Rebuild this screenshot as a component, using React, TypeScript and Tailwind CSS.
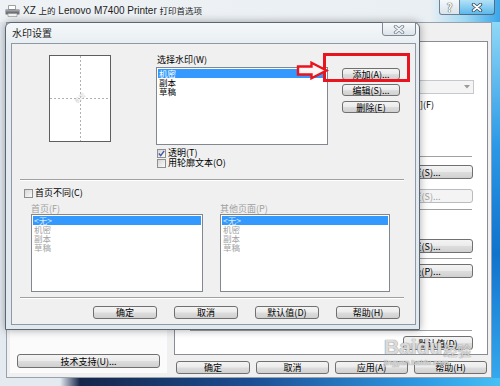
import type { ReactNode } from 'react'

function Btn({ className = '', disabled = false, children }: { className?: string; disabled?: boolean; children?: ReactNode }) {
  return (
    <div
      className={`flex shrink-0 items-center justify-center rounded-[3px] border text-[9px] leading-none whitespace-nowrap ${
        disabled
          ? 'border-[#b8bcc0] bg-[#f4f4f4] text-[#a0a0a0]'
          : 'border-[#707070] bg-[linear-gradient(180deg,#f4f4f4_0%,#ebebeb_48%,#dddddd_52%,#d0d0d0_100%)] text-black'
      } ${className}`}
    >
      {children}
    </div>
  )
}

function Check({ checked = false, label }: { checked?: boolean; label: string }) {
  return (
    <div className="flex h-[10px] items-center gap-[2px]">
      <div className="flex h-[9px] w-[9px] items-center justify-center border border-[#8f8f8f] bg-[linear-gradient(135deg,#d6d6d6,#fafafa)]">
        {checked && (
          <svg width="7" height="7" viewBox="0 0 7 7">
            <path d="M0.8 3.6 L2.7 5.6 L6.2 0.9" stroke="#3b5aa8" strokeWidth="1.4" fill="none" />
          </svg>
        )}
      </div>
      <span className="text-[9px] leading-[10px]">{label}</span>
    </div>
  )
}

function ListBox({ items, disabled = false, className = '' }: { items: string[]; disabled?: boolean; className?: string }) {
  return (
    <div className={`border border-[#828790] bg-white p-px ${className}`}>
      {items.map((t, i) => (
        <div
          key={t}
          className={`h-[9px] pl-px text-[8.5px] leading-[9px] ${
            i === 0 ? (disabled ? 'bg-[#3399ff] text-[#d8e6f5]' : 'bg-[#3399ff] text-white') : disabled ? 'text-[#a3a3a3]' : 'text-black'
          }`}
        >
          {t}
        </div>
      ))}
    </div>
  )
}

function Sep({ className = '' }: { className?: string }) {
  return <div className={`h-[2px] shrink-0 border-t border-b border-t-[#a0a0a0] border-b-white ${className}`} />
}

function XGlyph({ dark, light }: { dark: string; light: string }) {
  return (
    <svg width="12" height="9" viewBox="0 0 12 9">
      <path d="M2.5 1.5 L9.5 7.5 M9.5 1.5 L2.5 7.5" stroke={dark} strokeWidth="3.4" strokeLinecap="round" />
      <path d="M2.5 1.5 L9.5 7.5 M9.5 1.5 L2.5 7.5" stroke={light} strokeWidth="1.7" strokeLinecap="round" />
    </svg>
  )
}

export default function App() {
  return (
    <div className="relative h-[386px] w-[500px] overflow-hidden bg-[#e4eaf0] font-['Noto_Sans_CJK_SC',sans-serif] text-[9px] leading-[11px] text-black">
      {/* outer window */}
      <div className="flex h-full flex-col">
        {/* title bar */}
        <div className="flex h-[22px] shrink-0 items-start bg-[linear-gradient(90deg,#eef2f5_0%,#eaeff3_86%,#9fd8f2_93%,#3aa6ea_100%)]">
          <div className="flex items-center gap-[3px] pl-[5px] pt-[4px]">
            <svg width="15" height="12" viewBox="0 0 15 12">
              <path d="M3.5 0.5h7v4h-7z" fill="#fff" stroke="#8a8a8a" strokeWidth="0.8" />
              <path d="M0.5 4.5h14v5h-14z" fill="#6e737a" />
              <path d="M1 5h13v1.5H1z" fill="#9aa0a6" />
              <path d="M3 8.5h9v3H3z" fill="#f4f4f4" stroke="#8a8a8a" strokeWidth="0.6" />
            </svg>
            <div className="font-['Liberation_Sans','Noto_Sans_CJK_SC',sans-serif] text-[10px] leading-[14px] text-[#1c1c1c]">
              XZ <span className="text-[8.5px]">上的</span> Lenovo M7400 Printer <span className="text-[8.5px]">打印首选项</span>
            </div>
          </div>
          <div className="mr-[5px] ml-auto flex">
            <div className="flex h-[15px] w-[21px] items-center justify-center rounded-bl-[3px] border border-t-0 border-[#6f8191] bg-[linear-gradient(180deg,#f4f8fb,#d9e4ec)] text-[11px] leading-none font-bold text-white [text-shadow:0_0_1px_#333,0_0_1px_#333]">
              ?
            </div>
            <div className="flex h-[15px] w-[35px] items-center justify-center rounded-br-[3px] border border-t-0 border-l-0 border-[#4d6c85] bg-[linear-gradient(180deg,#b4e2f6,#5bb9ec)]">
              <XGlyph dark="#3b4b5b" light="#ffffff" />
            </div>
          </div>
        </div>

        {/* body */}
        <div className="flex min-h-0 flex-1">
          <div className="w-[6px] shrink-0" />
          <div className="flex min-w-0 flex-1 bg-[#f0f0f0] shadow-[inset_0_0_0_1px_#97a2ad]">
            {/* left column */}
            <div className="mt-[4px] mb-[5px] ml-[4px] flex w-[157px] shrink-0 flex-col justify-end bg-[#fbfbfb]">
              <Btn className="mb-[5px] ml-[7px] h-[14px] w-[143px]">技术支持(U)...</Btn>
            </div>
            {/* right column */}
            <div className="ml-[7px] flex w-[314px] shrink-0 flex-col">
              <div className="h-[19px] shrink-0" />
              <div className="flex h-[314px] shrink-0 flex-col border border-[#898c95] bg-white pr-[13px]">
                <div className="mt-[38px] flex h-[14px] w-[150px] items-center justify-end self-end border border-[#c5c8cc] bg-[#f4f4f4] pr-[3px]">
                  <svg width="6" height="4" viewBox="0 0 6 4">
                    <path d="M0 0h6L3 3.5z" fill="#9a9a9a" />
                  </svg>
                </div>
                <div className="mt-[5px] ml-[245px] h-[11px] text-[9px] leading-[11px]">](F)</div>
                <Sep className="mt-[46px] mr-[2px] w-[282px] self-end" />
                <Btn className="mt-[7px] mr-px h-[14px] w-[102px] self-end">设置(S)...</Btn>
                <Btn disabled className="mt-[10px] mr-px h-[14px] w-[102px] self-end">
                  设置(S)...
                </Btn>
                <Sep className="mt-[6px] mr-[2px] w-[282px] self-end" />
                <Btn className="mt-[28px] mr-px h-[14px] w-[102px] self-end">设置(S)...</Btn>
                <Sep className="mt-[5px] mr-[2px] w-[282px] self-end" />
                <Btn className="mt-[4px] mr-px h-[14px] w-[102px] self-end">高级(P)...</Btn>
                <Sep className="mt-[52px] mr-[2px] w-[282px] self-end" />
                <Btn className="mt-[4px] mr-px h-[14px] w-[70px] self-end">默认值(D)</Btn>
              </div>
              <div className="mt-[6px] ml-[2px] flex gap-[6px]">
                <Btn className="h-[13px] w-[74px]">确定</Btn>
                <Btn className="h-[13px] w-[73px]">取消</Btn>
                <Btn className="h-[13px] w-[73px]">应用(A)</Btn>
                <Btn className="h-[13px] w-[73px]">帮助(H)</Btn>
              </div>
            </div>
          </div>
          <div className="w-[8px] shrink-0 bg-[linear-gradient(180deg,#8fd8f6_0%,#2b98e6_35%,#0f73cc_65%,#36a8ee_100%)]" />
        </div>
        <div className="h-[8px] shrink-0 bg-[linear-gradient(90deg,#e4eaf0_0%,#e4eaf0_12%,#16264a_16%,#1c4d92_50%,#2f9be4_85%,#46c0f4_100%)]" />
      </div>

      {/* watermark dialog */}
      <div className="absolute top-[22px] left-[5px] flex h-[308px] w-[415px] flex-col rounded-t-[6px] border border-[#5a6773] bg-[linear-gradient(180deg,#f5f8fa,#e6ecf1_24px,#e1e8ee)] shadow-[0_0_8px_rgba(0,0,0,0.35)]">
        <div className="flex h-[20px] shrink-0 items-start">
          <div className="pl-[6px] text-[10px] leading-[20px] text-[#1e1e1e]">水印设置</div>
          <div className="-mt-px mr-[3px] ml-auto flex h-[14px] w-[34px] items-center justify-center rounded-b-[3px] border border-[#7d8893] bg-[linear-gradient(180deg,#f7f9fb,#dde4ea)]">
            <XGlyph dark="#7a8591" light="#eef1f4" />
          </div>
        </div>
        <div className="ml-[5px] flex h-[282px] w-[405px] flex-col border border-[#8d99a5] bg-[#f0f0f0]">
          {/* top section */}
          <div className="flex h-[135px] shrink-0">
            <div className="mt-[11px] ml-[37px] h-[87px] w-[62px] shrink-0 border border-[#5e5e5e] bg-white">
              <svg width="60" height="85" viewBox="0 0 60 85">
                <line x1="30.5" y1="0" x2="30.5" y2="85" stroke="#b0b0b0" strokeDasharray="2 2" />
                <line x1="0" y1="42.5" x2="60" y2="42.5" stroke="#b0b0b0" strokeDasharray="2 2" />
                <text x="30" y="44" fontSize="6" fill="#d4d4d4" textAnchor="middle" transform="rotate(-45 30 42)">
                  机密
                </text>
              </svg>
            </div>
            <div className="mt-[10px] ml-[45px] flex w-[172px] shrink-0 flex-col">
              <div className="h-[11px] pl-px">选择水印(W)</div>
              <ListBox items={['机密', '副本', '草稿']} className="mt-[2px] h-[78px]" />
              <div className="mt-[3px] pl-px">
                <Check checked label="透明(T)" />
                <Check label="用轮廓文本(O)" />
              </div>
            </div>
            <div className="mt-[24px] ml-[14px] flex w-[58px] shrink-0 flex-col">
              <Btn className="h-[12px] w-[58px]">添加(A)...</Btn>
              <Btn className="mt-[4px] h-[12px] w-[58px]">编辑(S)...</Btn>
              <Btn className="mt-[5px] h-[12px] w-[58px]">删除(E)</Btn>
            </div>
          </div>
          <Sep className="ml-[8px] w-[384px]" />

          {/* pages section */}
          <div className="mt-[7px] ml-[12px]">
            <Check label="首页不同(C)" />
          </div>
          <div className="mt-[5px] flex">
            <div className="ml-[19px] flex w-[172px] shrink-0 flex-col">
              <div className="h-[11px] text-[#a0a0a0]">首页(F)</div>
              <ListBox disabled items={['<无>', '机密', '副本', '草稿']} className="h-[78px]" />
            </div>
            <div className="ml-[17px] flex w-[170px] shrink-0 flex-col">
              <div className="h-[11px] text-[#a0a0a0]">其他页面(P)</div>
              <ListBox disabled items={['<无>', '机密', '副本', '草稿']} className="h-[78px]" />
            </div>
          </div>
          <Sep className="mt-[5px] ml-[8px] w-[384px]" />
          <div className="mt-[7px] ml-[81px] flex gap-[17px]">
            <Btn className="h-[13px] w-[64px]">确定</Btn>
            <Btn className="h-[13px] w-[64px]">取消</Btn>
            <Btn className="h-[13px] w-[64px]">默认值(D)</Btn>
            <Btn className="h-[13px] w-[64px]">帮助(H)</Btn>
          </div>
        </div>
      </div>

      {/* red annotation */}
      <div className="pointer-events-none absolute top-[53px] left-[323px] h-[29px] w-[87px] border-[3px] border-[#e8141e]" />
      <svg className="pointer-events-none absolute top-[61px] left-[296px]" width="33" height="19" viewBox="0 0 33 19">
        <path d="M2 5.5 H15.5 V1.8 L30.5 9.5 L15.5 17.2 V13.5 H2 Z" fill="#fff5f5" stroke="#e8141e" strokeWidth="2.4" strokeLinejoin="miter" />
      </svg>

      {/* site watermark */}
      <div className="pointer-events-none absolute top-[336px] left-[384px] flex flex-col text-white/70 [text-shadow:0_0_1px_#8c8c8c,0_0_1px_#8c8c8c]">
        <div className="flex items-end">
          <span className="font-['Liberation_Sans',sans-serif] text-[21px] leading-[22px] font-bold">Baidu</span>
          <span className="ml-px text-[14px] leading-[16px]">经验</span>
        </div>
        <div className="font-['Liberation_Sans',sans-serif] text-[8px] leading-[9px]">jingyan.baidu.com</div>
      </div>
    </div>
  )
}
